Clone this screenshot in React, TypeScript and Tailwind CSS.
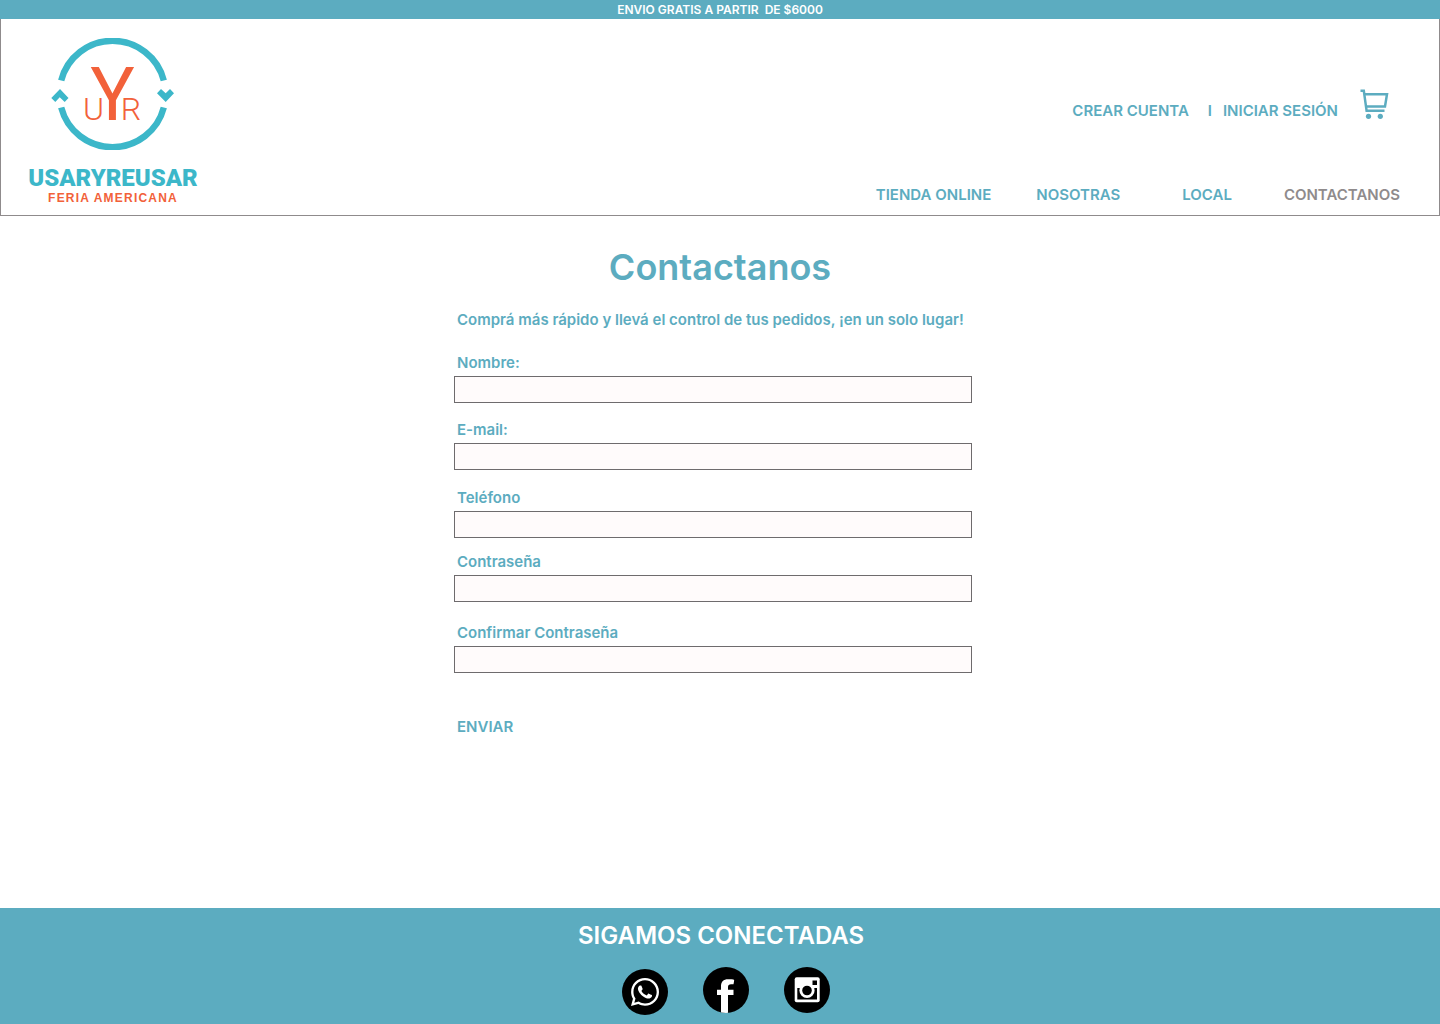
import { FaWhatsapp } from "react-icons/fa";

const fields = [
  { id: "nombre", label: "Nombre:", type: "text", space: "mt-[23px]" },
  { id: "email", label: "E-mail:", type: "email", space: "mt-[17px]" },
  { id: "telefono", label: "Teléfono", type: "tel", space: "mt-[18px]" },
  { id: "clave", label: "Contraseña", type: "password", space: "mt-3.5" },
  { id: "clave2", label: "Confirmar Contraseña", type: "password", space: "mt-[21px]" },
];

function Logo() {
  return (
    <a href="#" className="flex w-[170px] flex-col items-center" aria-label="Usar y Reusar, feria americana">
      <svg width="124" height="112" viewBox="31 18 124 112" className="block">
        <g fill="none" stroke="#3cb7c9" strokeWidth="6.4">
          <path d="M41.2 60.5A53 53 0 0 1 143.8 60.5" />
          <path d="M41.2 87.5A53 53 0 0 0 143.8 87.5" />
        </g>
        <g fill="#3cb7c9">
          <path d="M40 69L48.5 78L44.7 82L39.7 77.3L35.3 82L31.3 78Z" />
          <path d="M137 73.3L141 69L145.7 73.3L150 69L154 73.3L145.7 82Z" />
        </g>
        <g fill="#f2613a" textAnchor="middle" fontFamily="Roboto, sans-serif">
          <text x="92.5" y="99.7" fontSize="74" fontWeight="400">Y</text>
          <text x="73.5" y="99.7" fontSize="32" fontWeight="300">U</text>
          <text x="111" y="99.7" fontSize="32" fontWeight="300">R</text>
        </g>
      </svg>
      <span className="mt-4 font-[Roboto,sans-serif] text-2xl leading-6 font-black text-[#3cb7c9]">USARYREUSAR</span>
      <span className="mt-0.5 font-['Liberation_Sans',sans-serif] text-xs leading-[13px] font-bold tracking-widest whitespace-nowrap text-[#f2613a]">
        FERIA AMERICANA
      </span>
    </a>
  );
}

function CartIcon() {
  return (
    <svg width="30" height="32" viewBox="0 0 30 32" fill="none" stroke="currentColor" strokeWidth="2.5">
      <path d="M0.5 2.7H3.8L6.6 22.8H24.5" />
      <path d="M4.3 6.2H27L25 18.4H6" />
      <circle cx="8.5" cy="28.3" r="2.6" fill="currentColor" stroke="none" />
      <circle cx="20.3" cy="28.3" r="2.6" fill="currentColor" stroke="none" />
    </svg>
  );
}

function FacebookIcon() {
  return (
    <svg width="46" height="46" viewBox="0 0 46 46" fill="currentColor">
      <path d="M18 46V28H14V22.7H18V19.5C18 14.5 20.5 12.2 25 12.2H28.5Q31.3 12.2 31.2 13.5L30.5 17.3H28C26 17.3 25 18.3 25 20V22.7H30.5V28H25V46Z" />
    </svg>
  );
}

function InstagramIcon() {
  return (
    <svg width="46" height="46" viewBox="0 0 46 46">
      <rect x="10.7" y="10.3" width="25" height="25" rx="2" fill="currentColor" />
      <path d="M13.3 21V32.5H33V21" fill="#000" />
      <circle cx="23" cy="23.5" r="7.6" fill="currentColor" />
      <circle cx="23" cy="23.5" r="4.8" fill="#000" />
      <rect x="28.5" y="13.5" width="4.5" height="4.5" fill="#000" />
    </svg>
  );
}

export default function App() {
  return (
    <div className="flex min-h-screen flex-col bg-white font-[Inter,sans-serif] text-[15px] leading-5 font-semibold text-[#5cacc0]">
      <p className="bg-[#5cacc0] text-center text-xs leading-[19px] whitespace-pre text-white">
        {"ENVIO GRATIS A PARTIR  DE $6000"}
      </p>

      <header className="flex justify-between border-x border-b border-[#8f8b8c] pt-[19px] pr-[39px] pb-2.5 pl-[27px]">
        <Logo />
        <div className="flex flex-col items-end justify-between pt-[49px]">
          <div className="flex items-center pr-2.5">
            <a href="#" className="mt-3.5">CREAR CUENTA</a>
            <span className="mt-3.5 mr-[11px] ml-[19px]">I</span>
            <a href="#" className="mt-3.5">INICIAR SESIÓN</a>
            <a href="#" className="ml-[22px]" aria-label="Carrito">
              <CartIcon />
            </a>
          </div>
          <nav className="flex">
            <a href="#" className="mr-[45px]">TIENDA ONLINE</a>
            <a href="#" className="mr-[62px]">NOSOTRAS</a>
            <a href="#" className="mr-[52px]">LOCAL</a>
            <a href="#" aria-current="page" className="text-[#8f8b8c]">CONTACTANOS</a>
          </nav>
        </div>
      </header>

      <main className="grow pb-10">
        <h1 className="mt-7 text-center text-4xl leading-[46px]">Contactanos</h1>
        <form className="mx-auto mt-5 w-full max-w-[532px] pr-3.5" onSubmit={(e) => e.preventDefault()}>
          <p className="pl-[3px]">Comprá más rápido y llevá el control de tus pedidos, ¡en un solo lugar!</p>
          {fields.map((f) => (
            <div key={f.id} className={f.space}>
              <label htmlFor={f.id} className="block pl-[3px]">{f.label}</label>
              <input
                id={f.id}
                type={f.type}
                className="mt-[3px] block h-[27px] w-full border border-[#6e6b6d] bg-[#fffbfb] px-2 font-normal text-gray-700"
              />
            </div>
          ))}
          <button type="submit" className="mt-11 ml-[3px] block">ENVIAR</button>
        </form>
      </main>

      <footer className="bg-[#5cacc0] pt-3 pb-[9px] text-center text-white">
        <h2 className="pl-0.5 text-2xl leading-8">SIGAMOS CONECTADAS</h2>
        <div className="mt-[15px] flex justify-center gap-[35px] pl-3">
          <a href="#" aria-label="WhatsApp" className="mt-0.5 flex size-[46px] items-center justify-center rounded-full bg-black">
            <FaWhatsapp size={32} />
          </a>
          <a href="#" aria-label="Facebook" className="size-[46px] overflow-hidden rounded-full bg-black">
            <FacebookIcon />
          </a>
          <a href="#" aria-label="Instagram" className="size-[46px] overflow-hidden rounded-full bg-black">
            <InstagramIcon />
          </a>
        </div>
      </footer>
    </div>
  );
}
